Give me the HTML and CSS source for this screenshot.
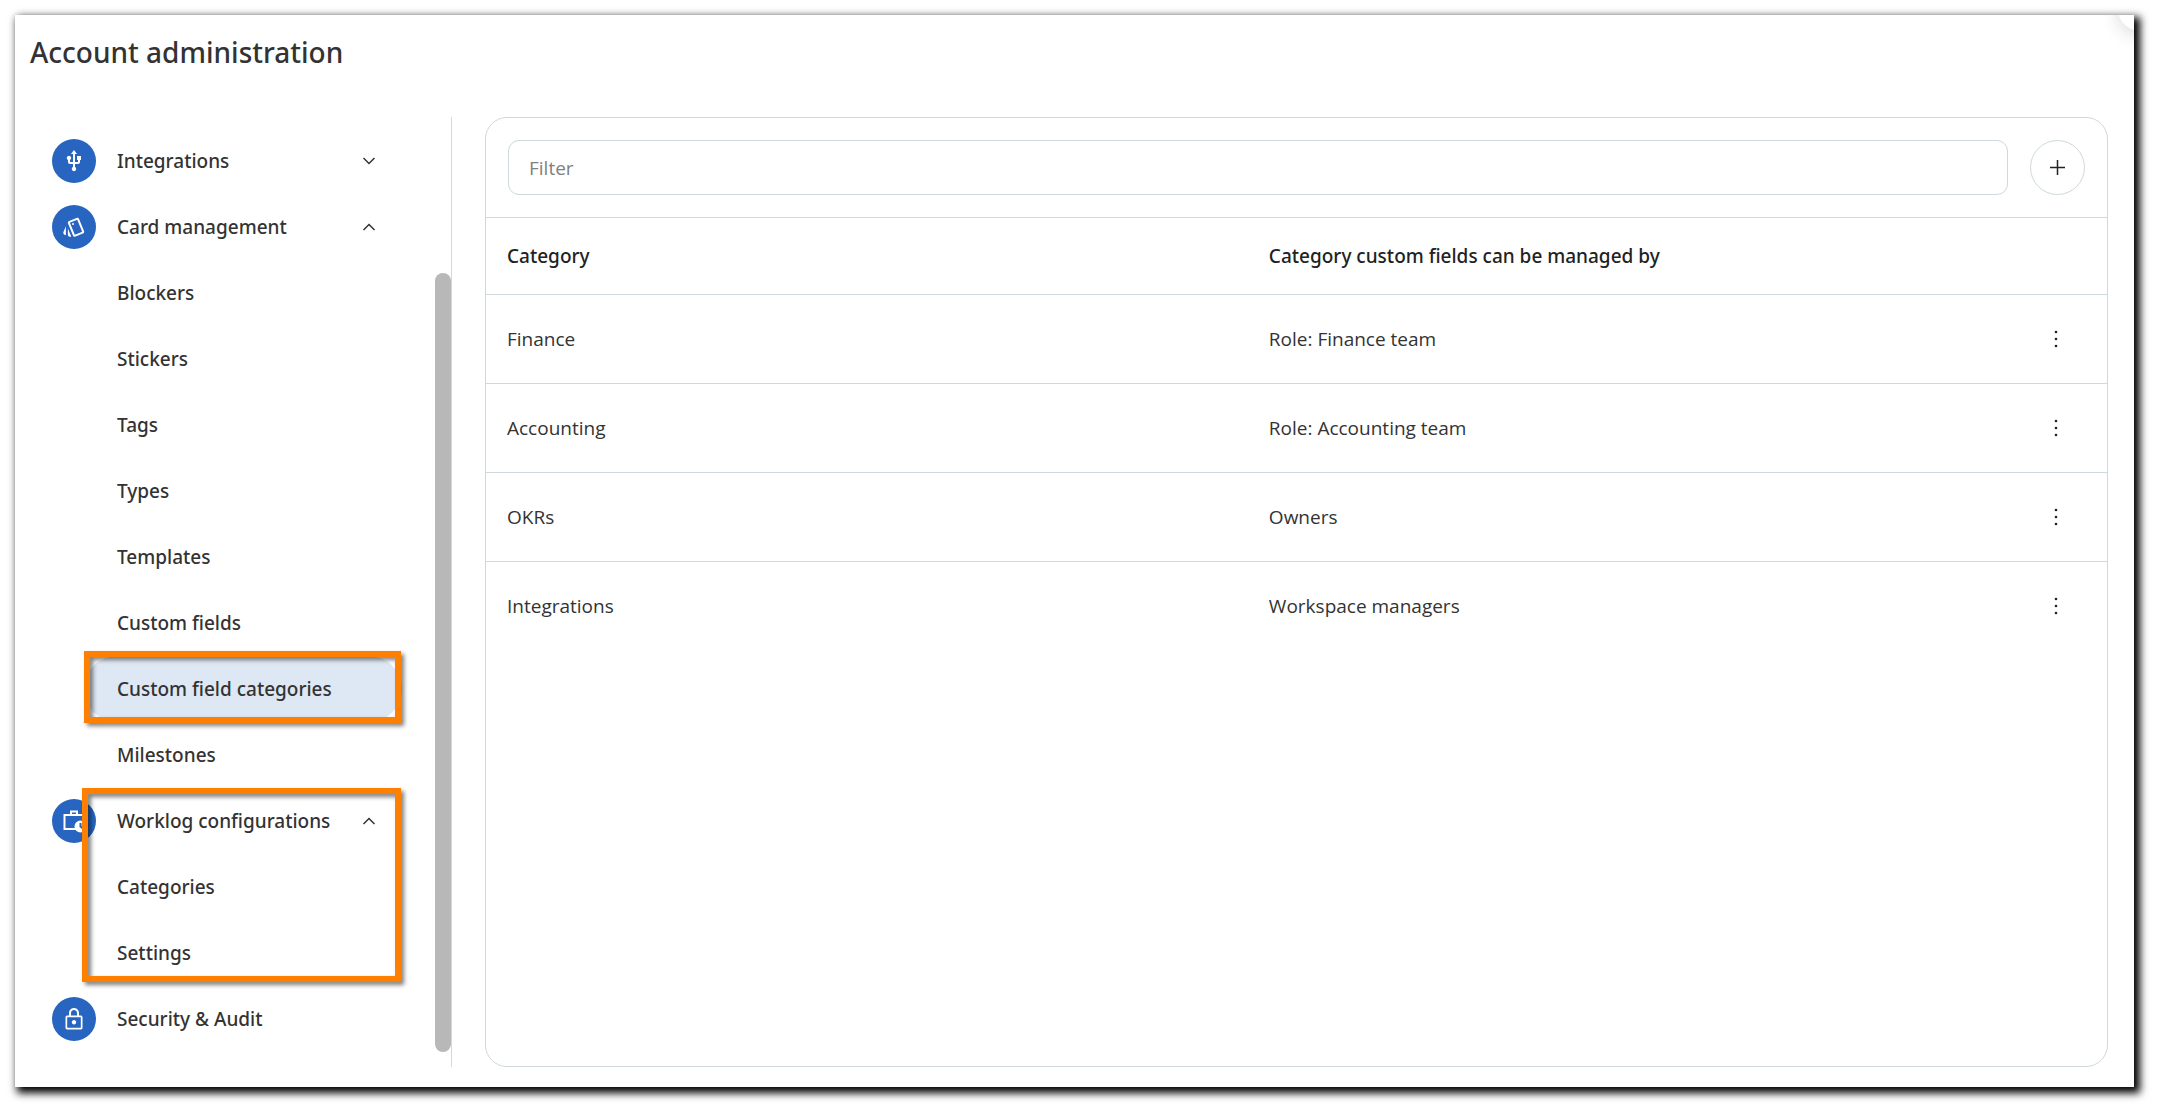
FILE: index.html
```html
<!DOCTYPE html>
<html lang="en">
<head>
<meta charset="utf-8">
<meta name="viewport" content="width=device-width, initial-scale=1">
<title>Account administration</title>
<link rel="stylesheet" href="styles.css">
</head>
<body>
<div class="window">
  <header class="header">
    <h1 class="title">Account administration</h1>
    <span class="corner" aria-hidden="true"></span>
  </header>
  <div class="content">
    <aside class="sidebar">
      <nav class="menu" aria-label="Administration">
        <button class="item section" type="button" aria-expanded="false">
          <span class="badge"><svg width="24" height="24" viewBox="0 0 24 24" fill="currentColor"><path d="M15 7v4h1v2h-3V5h2l-3-4-3 4h2v8H8v-2.070c.7-.37 1.200-1.080 1.200-1.930 0-1.210-.99-2.200-2.200-2.200S4.800 7.790 4.800 9c0 .85.5 1.560 1.200 1.930V13c0 1.110.89 2 2 2h3v3.050c-.71.37-1.200 1.100-1.200 1.950 0 1.220.99 2.200 2.200 2.200s2.200-.98 2.200-2.200c0-.85-.49-1.580-1.200-1.950V15h3c1.110 0 2-.89 2-2v-2h1V7h-4z"/></svg></span>
          <span class="label">Integrations</span>
          <svg class="chevron" width="14" height="8" viewBox="0 0 14 8"><path d="M1.500 1 7 6.500 12.500 1"/></svg>
        </button>
        <button class="item section" type="button" aria-expanded="true">
          <span class="badge"><svg width="24" height="24" viewBox="0 0 24 24" fill="currentColor"><path d="M2.530 19.650l1.340.56v-9.030l-2.430 5.860c-.41 1.020.08 2.190 1.090 2.610zm19.500-3.700L17.070 3.980c-.31-.75-1.040-1.210-1.810-1.230-.26 0-.53.04-.79.15L7.100 5.950c-.75.31-1.210 1.030-1.230 1.800-.01.27.04.54.15.8l4.960 11.970c.31.76 1.050 1.220 1.830 1.230.26 0 .52-.05.77-.15l7.360-3.050c1.020-.42 1.510-1.590 1.090-2.600zm-9.200 3.800L7.870 7.790l7.350-3.040h.01l4.950 11.950-7.350 3.050z"/><circle cx="11" cy="9" r="1"/><path d="M5.880 19.750c0 1.100.9 2 2 2h1.450l-3.450-8.340v6.340z"/></svg></span>
          <span class="label">Card management</span>
          <svg class="chevron" width="14" height="8" viewBox="0 0 14 8"><path d="M1.500 7 7 1.500 12.500 7"/></svg>
        </button>
        <a class="item sub" href="#blockers">Blockers</a>
        <a class="item sub" href="#stickers">Stickers</a>
        <a class="item sub" href="#tags">Tags</a>
        <a class="item sub" href="#types">Types</a>
        <a class="item sub" href="#templates">Templates</a>
        <a class="item sub" href="#custom-fields">Custom fields</a>
        <div class="marked">
          <a class="item sub current" href="#custom-field-categories" aria-current="page">Custom field categories</a>
          <span class="outline outline-item"></span>
        </div>
        <a class="item sub" href="#milestones">Milestones</a>
        <div class="marked">
          <button class="item section" type="button" aria-expanded="true">
            <span class="badge"><svg width="24" height="24" viewBox="0 0 24 24" fill="none" stroke="currentColor" stroke-width="2"><path d="M14 20H2.500V6H21.500v6M9 6V2.500h6V6"/><circle cx="18.500" cy="17.500" r="6" fill="currentColor" stroke="none"/><path class="hands" d="M18.500 14v3.500l2.500 2"/></svg></span>
            <span class="label">Worklog configurations</span>
            <svg class="chevron" width="14" height="8" viewBox="0 0 14 8"><path d="M1.500 7 7 1.500 12.500 7"/></svg>
          </button>
          <a class="item sub" href="#categories">Categories</a>
          <a class="item sub" href="#settings">Settings</a>
          <span class="outline outline-group"></span>
        </div>
        <a class="item section" href="#security">
          <span class="badge"><svg width="24" height="24" viewBox="0 0 24 24" fill="currentColor"><path d="M18.500 8.500H17V6c0-2.760-2.240-5-5-5S7 3.240 7 6v2.500H5.500c-1.100 0-2 .7-2 1.500v11c0 .8.900 1.500 2 1.500h13c1.100 0 2-.7 2-1.500V10c0-.8-.9-1.500-2-1.500zM9 6c0-1.660 1.340-3 3-3s3 1.340 3 3v2.500H9zM18.800 20.800H5.200V10.300h13.600zM12 17.500c1.300 0 2.200-1 2.200-2.200s-1-2.200-2.200-2.200-2.200 1-2.200 2.200.9 2.200 2.200 2.200z"/></svg></span>
          <span class="label">Security &amp; Audit</span>
        </a>
      </nav>
      <div class="thumb" aria-hidden="true"></div>
    </aside>
    <main class="card">
      <div class="toolbar">
        <input class="filter" type="text" placeholder="Filter" aria-label="Filter">
        <button class="add" type="button" aria-label="Add category"><svg width="17" height="17" viewBox="0 0 17 17"><path d="M8.500 1v15M1 8.500h15"/></svg></button>
      </div>
      <table class="table">
        <colgroup><col class="col-name"><col><col class="col-menu"></colgroup>
        <thead>
          <tr><th scope="col">Category</th><th scope="col">Category custom fields can be managed by</th><td></td></tr>
        </thead>
        <tbody>
          <tr><td>Finance</td><td>Role: Finance team</td><td><button class="more" type="button" aria-label="Finance actions"><svg width="4" height="18" viewBox="0 0 4 18"><circle cx="2" cy="2" r="1.300"/><circle cx="2" cy="9" r="1.300"/><circle cx="2" cy="16" r="1.300"/></svg></button></td></tr>
          <tr><td>Accounting</td><td>Role: Accounting team</td><td><button class="more" type="button" aria-label="Accounting actions"><svg width="4" height="18" viewBox="0 0 4 18"><circle cx="2" cy="2" r="1.300"/><circle cx="2" cy="9" r="1.300"/><circle cx="2" cy="16" r="1.300"/></svg></button></td></tr>
          <tr><td>OKRs</td><td>Owners</td><td><button class="more" type="button" aria-label="OKRs actions"><svg width="4" height="18" viewBox="0 0 4 18"><circle cx="2" cy="2" r="1.300"/><circle cx="2" cy="9" r="1.300"/><circle cx="2" cy="16" r="1.300"/></svg></button></td></tr>
          <tr><td>Integrations</td><td>Workspace managers</td><td><button class="more" type="button" aria-label="Integrations actions"><svg width="4" height="18" viewBox="0 0 4 18"><circle cx="2" cy="2" r="1.300"/><circle cx="2" cy="9" r="1.300"/><circle cx="2" cy="16" r="1.300"/></svg></button></td></tr>
        </tbody>
      </table>
    </main>
  </div>
</div>
</body>
</html>
```
FILE: styles.css
```css
* { box-sizing: border-box; }

body {
  margin: 0;
  padding: 15px 27px 27px 15px;
  min-height: 100vh;
  display: flex;
  background: #fff;
  color: #333;
  font-family: "Open Sans", "Noto Sans", sans-serif;
  font-size: 19px;
  line-height: 26px;
}

button, input { font: inherit; color: inherit; }
button { background: none; border: 0; padding: 0; cursor: pointer; }

.window {
  flex: 1;
  display: flex;
  flex-direction: column;
  background: #fff;
  box-shadow: 4px 4px 8px 2px #000;
}

.header {
  position: relative;
  overflow: hidden;
  height: 102px;
  padding: 17px 15px;
}
.title {
  margin: 0;
  font-family: "Noto Sans", "Open Sans", sans-serif;
  font-size: 28px;
  line-height: 40px;
  font-weight: 500;
}
.corner {
  position: absolute;
  top: -28px;
  right: -28px;
  width: 44px;
  height: 44px;
  border-radius: 50%;
  background: #fff;
  box-shadow: 0 4px 18px rgba(0, 0, 0, 0.15);
}

.content {
  flex: 1;
  display: flex;
  gap: 33px;
  padding: 0 26px 20px 37px;
}

.sidebar {
  display: flex;
  gap: 33px;
  border-right: 1px solid #cfd8dc;
}
.menu {
  width: 350px;
  padding: 11px 0 15px;
}
.thumb {
  width: 16px;
  margin: 156px 0 15px;
  border-radius: 8px;
  background: #b8b8b8;
}

.item {
  display: flex;
  align-items: center;
  height: 66px;
  color: #333;
  font-family: "Noto Sans", "Open Sans", sans-serif;
  font-weight: 500;
  text-align: left;
  text-decoration: none;
}
.section { width: 100%; gap: 21px; padding-right: 26px; }
.sub { margin-left: 32px; padding-left: 33px; }
.current { border-radius: 33px; background: #dee7f4; }
.label { flex: 1; }

.badge {
  display: grid;
  place-items: center;
  width: 44px;
  height: 44px;
  border-radius: 50%;
  background: #2765c0;
  color: #fff;
}
.hands { stroke: #2765c0; }
.chevron { fill: none; stroke: #333; stroke-width: 1.5; }

.marked { position: relative; }
.outline {
  position: absolute;
  border: 6px solid #ff8000;
  filter: drop-shadow(3px 3px 2px rgba(0, 0, 0, 0.5));
  pointer-events: none;
}
.outline-item { inset: -5px 1px -1px 32px; }
.outline-group { inset: 0 1px 4px 30px; }

.card {
  flex: 1;
  border: 1px solid #cfd8dc;
  border-radius: 22px;
}
.toolbar {
  display: flex;
  gap: 22px;
  padding: 22px;
  border-bottom: 1px solid #cfd8dc;
}
.filter {
  flex: 1;
  min-width: 0;
  height: 55px;
  padding: 0 20px;
  border: 1px solid #cfd8dc;
  border-radius: 11px;
  background: #fff;
}
.filter::placeholder { color: #808080; opacity: 1; }
.add {
  display: grid;
  place-items: center;
  width: 55px;
  height: 55px;
  border: 1px solid #cfd8dc;
  border-radius: 50%;
}
.add svg { fill: none; stroke: #222; stroke-width: 1.5; }

.table {
  width: 100%;
  table-layout: fixed;
  border-collapse: separate;
  border-spacing: 0;
}
.col-name { width: 47%; }
.col-menu { width: 100px; }
.table th, .table td { padding: 0 22px 0 21px; text-align: left; }
.table th {
  height: 76px;
  font-family: "Noto Sans", "Open Sans", sans-serif;
  font-weight: 500;
  color: #222;
}
.table tbody td { height: 89px; border-top: 1px solid #cfd8dc; }
.more {
  display: grid;
  place-items: center;
  width: 55px;
  height: 55px;
}
.more svg { fill: #222; }
```
